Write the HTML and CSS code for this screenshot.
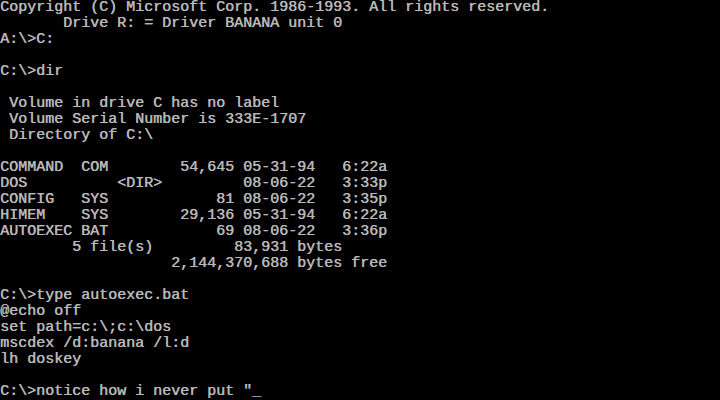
FILE: index.html
```html
<!DOCTYPE html>
<html>
<head>
<meta charset="utf-8">
<link rel="stylesheet" href="styles.css">
</head>
<body>
<pre class="screen">Copyright (C) Microsoft Corp. 1986-1993. All rights reserved.
       Drive R: = Driver BANANA unit 0
A:\>C:

C:\>dir

 Volume in drive C has no label
 Volume Serial Number is 333E-1707
 Directory of C:\

COMMAND  COM        54,645 05-31-94   6:22a
DOS          &lt;DIR&gt;         08-06-22   3:33p
CONFIG   SYS            81 08-06-22   3:35p
HIMEM    SYS        29,136 05-31-94   6:22a
AUTOEXEC BAT            69 08-06-22   3:36p
        5 file(s)         83,931 bytes
                   2,144,370,688 bytes free

C:\>type autoexec.bat
@echo off
set path=c:\;c:\dos
mscdex /d:banana /l:d
lh doskey

C:\>notice how i never put "_</pre>
</body>
</html>
```

FILE: styles.css
```css
html, body {
  margin: 0;
  padding: 0;
  background: #000;
  width: 720px;
  height: 400px;
  overflow: hidden;
}
.screen {
  margin: 0;
  padding: 0;
  font-family: "Liberation Mono", "DejaVu Sans Mono", monospace;
  font-size: 15px;
  line-height: 16px;
  color: #b8b8b8;
  white-space: pre;
  text-shadow: 0.4px 0 0 #b8b8b8;
}
```
